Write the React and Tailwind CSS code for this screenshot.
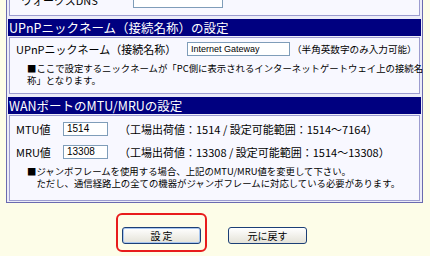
const Header = ({ children }) => (
  <div className="h-[17px] bg-[#000080] pl-px text-[12.5px] leading-[17px] text-white whitespace-nowrap">
    {children}
  </div>
);

const Field = ({ value, className = '' }) => (
  <div
    className={`h-[14px] border border-[#7f9db9] bg-white pl-[3px] font-['Liberation_Sans',sans-serif] leading-[12px] text-black ${className}`}
  >
    {value}
  </div>
);

const Button = ({ children, focused = false }) => (
  <button
    type="button"
    className={`h-[17px] w-[79px] rounded-[3px] border border-[#1c3f76] bg-gradient-to-b from-white to-[#e4e2d8] text-[10px] leading-[15px] text-black ${
      focused ? 'shadow-[inset_0_0_0_1px_#a8c6ef]' : ''
    }`}
  >
    {children}
  </button>
);

export default function App() {
  return (
    <div className="h-[256px] w-[430px] overflow-hidden bg-[#fdfde8] font-['Noto_Sans_CJK_JP',sans-serif] text-black">
      <div className="ml-[6px] w-[417px] border-x border-b border-[#6a6ab0] bg-[#ececf8] px-px pb-px">
        {/* previous section, clipped by the top edge */}
        <div className="mx-px h-[16px] overflow-hidden border-x border-b border-[#9c9cd0] bg-[#f8f8ff]">
          <div className="-mt-[9px] flex h-[17px] items-start pl-[11px]">
            <span className="mt-[2px] w-[112px] text-[11px] leading-[14px] whitespace-nowrap">ウォークスDNS</span>
            <div className="h-[17px] w-[90px] border border-[#7f9db9] bg-white" />
          </div>
        </div>

        {/* UPnP */}
        <div className="mt-[3px]">
          <Header>UPnPニックネーム（接続名称）の設定</Header>
        </div>
        <div className="mx-px mt-px h-[57px] border border-[#9c9cd0] bg-[#f8f8ff] pl-[6px] pt-[4px]">
          <div className="flex h-[14px] items-center whitespace-nowrap">
            <span className="w-[171px] text-[11px] leading-[14px]">UPnPニックネーム（接続名称）</span>
            <Field value="Internet Gateway" className="w-[103px] text-[9px]" />
            <span className="ml-[2px] text-[9.6px] leading-[14px]">（半角英数字のみ入力可能）</span>
          </div>
          <p className="mt-[7px] pl-[11px] text-[9.4px] leading-[11.5px] whitespace-nowrap">
            ■ここで設定するニックネームが「PC側に表示されるインターネットゲートウェイ上の接続名
            <br />
            称」となります。
          </p>
        </div>

        {/* WAN MTU/MRU */}
        <div className="mt-[3px]">
          <Header>WANポートのMTU/MRUの設定</Header>
        </div>
        <div className="mx-px mt-px h-[86px] border border-[#9c9cd0] bg-[#f8f8ff] pl-[6px] pt-[6px]">
          <div className="flex h-[14px] items-center whitespace-nowrap">
            <span className="w-[47px] text-[11px] leading-[14px]">MTU値</span>
            <Field value="1514" className="w-[45px] text-[10px]" />
            <span className="ml-[11px] text-[11px] leading-[14px]">（工場出荷値：1514 / 設定可能範囲：1514〜7164）</span>
          </div>
          <div className="mt-[9px] flex h-[14px] items-center whitespace-nowrap">
            <span className="w-[47px] text-[11px] leading-[14px]">MRU値</span>
            <Field value="13308" className="w-[45px] text-[10px]" />
            <span className="ml-[11px] text-[11px] leading-[14px]">（工場出荷値：13308 / 設定可能範囲：1514〜13308）</span>
          </div>
          <p className="mt-[6px] pl-[11px] text-[9.4px] leading-[12px] whitespace-nowrap">
            ■ジャンボフレームを使用する場合、上記のMTU/MRU値を変更して下さい。
            <br />
            <span className="pl-[9.4px]">ただし、通信経路上の全ての機器がジャンボフレームに対応している必要があります。</span>
          </p>
        </div>
      </div>

      {/* buttons */}
      <div className="mt-[10px] flex items-center pl-[116px]">
        <div className="rounded-[6px] border-2 border-[#e81c1c] px-[4px] pb-[5px] pt-[6px]">
          <Button focused>設 定</Button>
        </div>
        <div className="ml-[21px]">
          <Button>元に戻す</Button>
        </div>
      </div>
    </div>
  );
}
